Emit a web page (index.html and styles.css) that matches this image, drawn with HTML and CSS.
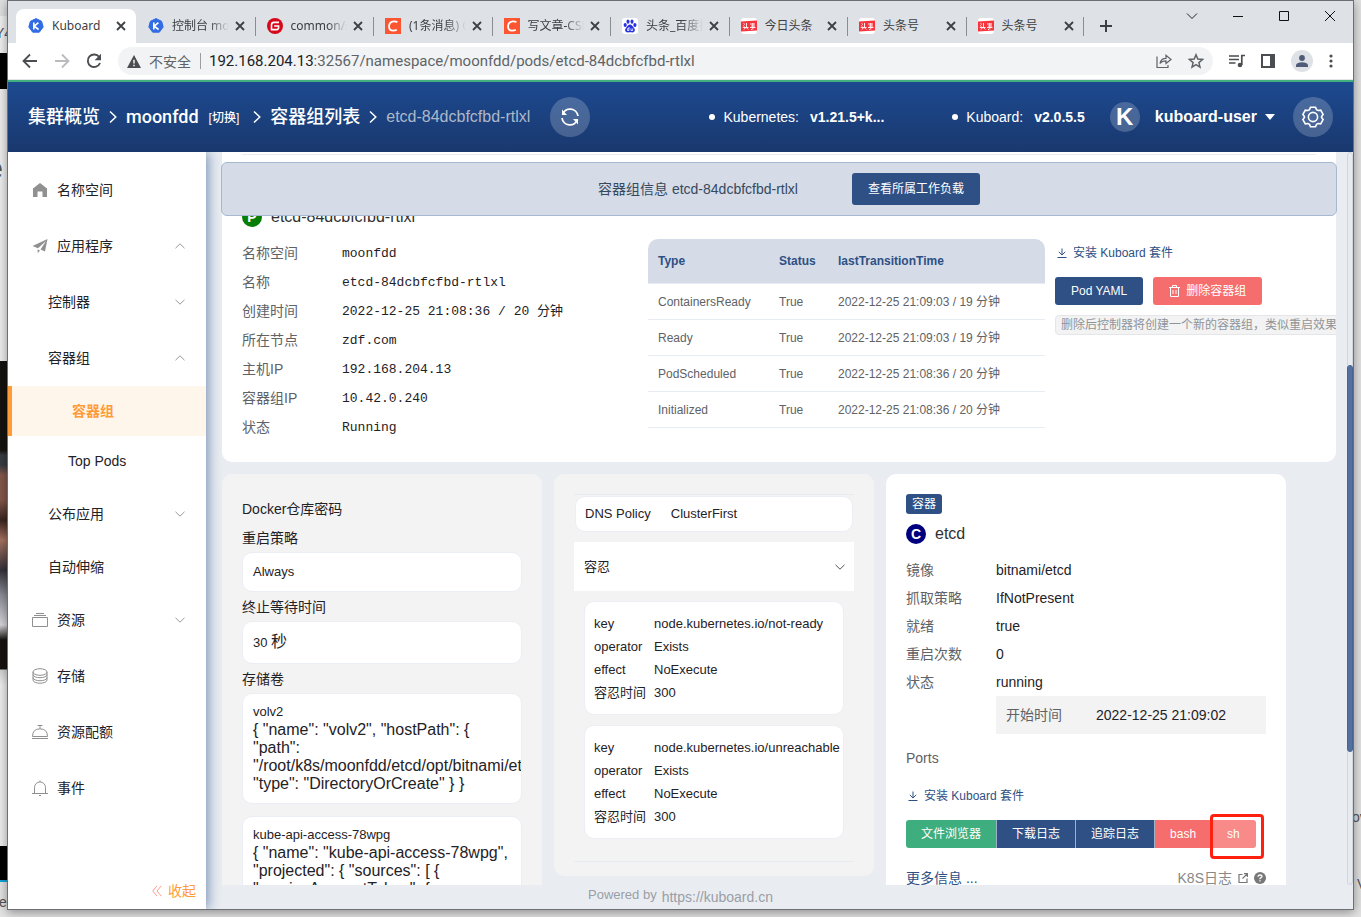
FILE: index.html
```html
<!DOCTYPE html>
<html lang="zh-CN">
<head>
<meta charset="utf-8">
<title>Kuboard</title>
<link rel="stylesheet" href="styles.css">
</head>
<body>
<svg class="defs" width="0" height="0" aria-hidden="true">
  <symbol id="close" viewBox="0 0 10 10"><path d="M1 1l8 8M9 1l-8 8" stroke="#3c4043" stroke-width="1.8" fill="none"/></symbol>
  <symbol id="fav-k" viewBox="0 0 16 16"><path d="M8 .6l5.6 2.7L15.2 9l-3.9 5.2H4.7L.8 9l1.6-5.7z" fill="#326ce5" stroke="#326ce5" stroke-linejoin="round"/><path d="M5.8 4.5v7M10.4 4.7L6.2 8.2l4.4 3.3" stroke="#fff" stroke-width="1.6" fill="none"/></symbol>
  <symbol id="fav-g" viewBox="0 0 16 16"><circle cx="8" cy="8" r="8" fill="#d7081a"/><path d="M12 4.4H7Q4.5 4.4 4.5 7v4.6h5.2q1.9 0 1.9-2V8H7.2" stroke="#fff" stroke-width="1.6" fill="none"/></symbol>
  <symbol id="fav-c" viewBox="0 0 16 16"><path d="M0 0h16v16H0z" fill="#fc5531"/><path d="M12.4 4.2Q11 3.2 8.6 3.3 4.3 3.7 4 8.2q.1 4.4 4.2 4.5 2.2 0 3.6-.9" stroke="#fff" stroke-width="1.8" fill="none"/></symbol>
  <symbol id="fav-b" viewBox="0 0 16 16"><rect width="16" height="16" rx="3" fill="#fff"/><g fill="#2932e1"><ellipse cx="3.2" cy="7" rx="1.6" ry="2.1"/><ellipse cx="6" cy="3.6" rx="1.5" ry="2.2"/><ellipse cx="10" cy="3.6" rx="1.5" ry="2.2"/><ellipse cx="12.9" cy="7" rx="1.6" ry="2.1"/><path d="M8 6.6c1.8 0 2.3 1.6 3.6 2.8 1.700 1.500 1.600 3.200.5 4.400-1.100 1-2.600.4-4.100.4s-3 .6-4.100-.4c-1.100-1.200-1.200-2.900.5-4.400C5.700 8.200 6.200 6.600 8 6.600z"/></g><path d="M7 9v3.500H5.500v-1.800H7M9 10.500v2h1.700v-2" stroke="#fff" stroke-width=".8" fill="none"/></symbol>
  <symbol id="fav-t" viewBox="0 0 16 16"><rect width="16" height="16" rx="3" fill="#fff"/><path d="M0 3.500L16 2.500v10L0 13.500z" fill="#f8333c"/><path d="M2.500 5.500l1.500 1M2 7.500l1.500 1M1.800 9.500h5.700M5.500 5v4l-2.800 2.500M5.800 10l1.500 1.500M9 6h5M10 8h4M11.800 5v6.500M9 9.500h5.500M10 11.500h1" stroke="#fff" stroke-width=".9" fill="none"/></symbol>
  <symbol id="up" viewBox="0 0 10 6"><path d="M.5 5.200L5 .8l4.500 4.400" fill="none" stroke="currentColor"/></symbol>
  <symbol id="down" viewBox="0 0 10 6"><path d="M.5 .8L5 5.200 9.500 .8" fill="none" stroke="currentColor"/></symbol>
  <symbol id="next" viewBox="0 0 8 14"><path d="M1 1.500L6.800 7 1 12.500" fill="none" stroke="currentColor" stroke-width="1.500"/></symbol>
  <symbol id="dl" viewBox="0 0 10 10"><path d="M5 .5v6.300M1.800 3.900L5 7l3.200-3.100M.5 9.500h9" fill="none" stroke="currentColor"/></symbol>
</svg>

<div class="backdrop" aria-hidden="true">
  <div class="strip-left"></div>
  <span class="bg-y4">Y4</span><span class="bg-e-big">e</span><span class="bg-e">e</span>
  <span class="bg-ov">ov</span><span class="bg-v">V</span>
</div>

<div class="window">
  <div class="tabbar">
    <div class="tabs">
      <div class="tab active"><svg class="fav"><use href="#fav-k"/></svg><span>Kuboard</span><button aria-label="关闭"><svg><use href="#close"/></svg></button></div>
      <div class="tab"><svg class="fav"><use href="#fav-k"/></svg><span>控制台 moonfdd</span><button aria-label="关闭"><svg><use href="#close"/></svg></button></div>
      <div class="tab"><svg class="fav"><use href="#fav-g"/></svg><span>common/src</span><button aria-label="关闭"><svg><use href="#close"/></svg></button></div>
      <div class="tab"><svg class="fav"><use href="#fav-c"/></svg><span>(1条消息) C</span><button aria-label="关闭"><svg><use href="#close"/></svg></button></div>
      <div class="tab"><svg class="fav"><use href="#fav-c"/></svg><span>写文章-CSDN</span><button aria-label="关闭"><svg><use href="#close"/></svg></button></div>
      <div class="tab"><svg class="fav"><use href="#fav-b"/></svg><span>头条_百度搜</span><button aria-label="关闭"><svg><use href="#close"/></svg></button></div>
      <div class="tab"><svg class="fav"><use href="#fav-t"/></svg><span>今日头条</span><button aria-label="关闭"><svg><use href="#close"/></svg></button></div>
      <div class="tab"><svg class="fav"><use href="#fav-t"/></svg><span>头条号</span><button aria-label="关闭"><svg><use href="#close"/></svg></button></div>
      <div class="tab"><svg class="fav"><use href="#fav-t"/></svg><span>头条号</span><button aria-label="关闭"><svg><use href="#close"/></svg></button></div>
    </div>
    <button class="new-tab" aria-label="新标签页"><svg width="12" height="12" viewBox="0 0 12 12"><path d="M6 0v12M0 6h12" stroke="#3c4043" stroke-width="2"/></svg></button>
    <div class="win-controls">
      <button aria-label="搜索标签页"><svg width="12" height="12" viewBox="0 0 12 12"><path d="M1 3.500l5 5 5-5" fill="none" stroke="#222"/></svg></button>
      <button aria-label="最小化"><svg width="12" height="12" viewBox="0 0 12 12"><path d="M1 6.500h10" stroke="#111"/></svg></button>
      <button aria-label="最大化"><svg width="12" height="12" viewBox="0 0 12 12"><path d="M1.500 1.500h9v9h-9z" fill="none" stroke="#111"/></svg></button>
      <button aria-label="关闭窗口"><svg width="12" height="12" viewBox="0 0 12 12"><path d="M1 1l10 10M11 1L1 11" stroke="#111"/></svg></button>
    </div>
  </div>

  <div class="toolbar">
    <button aria-label="后退"><svg width="16" height="16" viewBox="0 0 16 16"><path d="M15 8H2M8 1.500L1.500 8 8 14.500" fill="none" stroke="#4a4d51" stroke-width="1.800"/></svg></button>
    <button aria-label="前进"><svg width="16" height="16" viewBox="0 0 16 16"><path d="M1 8h13M8 1.500L14.500 8 8 14.500" fill="none" stroke="#b9bbbe" stroke-width="1.800"/></svg></button>
    <button aria-label="刷新"><svg width="16" height="16" viewBox="0 0 16 16"><path d="M13.200 4A6.300 6.300 0 1 0 14 10" fill="none" stroke="#4a4d51" stroke-width="1.900"/><path d="M15 .8v6.400H8.600z" fill="#4a4d51"/></svg></button>
    <div class="omnibox">
      <svg width="14" height="13" viewBox="0 0 14 13"><path d="M7 0l7 13H0z" fill="#4a4d51"/><path d="M7 4.800v3.700M7 9.800v1.500" stroke="#fff" stroke-width="1.400"/></svg>
      <span class="insecure">不安全</span>
      <span class="url" role="textbox" aria-label="地址栏"><b>192.168.204.13</b>:32567/namespace/moonfdd/pods/etcd-84dcbfcfbd-rtlxl</span>
      <button aria-label="分享"><svg width="16" height="14" viewBox="0 0 16 14"><path d="M1 2.500v11h11V11M4 9.500C4.500 6 7 4.300 10 4.300V1.300L15 5.500l-5 4V6.800C7 6.800 5.500 7.500 4 9.500z" fill="none" stroke="#5f6368" stroke-width="1.200"/></svg></button>
      <button aria-label="收藏"><svg width="16" height="16" viewBox="0 0 16 16"><path d="M8 1.800l1.800 4.300 4.700.4-3.600 3.100 1.100 4.600L8 11.700l-4 2.500 1.100-4.600L1.500 6.500l4.700-.4z" fill="none" stroke="#5f6368" stroke-width="1.500"/></svg></button>
    </div>
    <div class="actions">
      <button aria-label="媒体"><svg width="16" height="14" viewBox="0 0 16 14"><path d="M0 2h10M0 5.500h10M0 9h6.500" stroke="#4a4d51" stroke-width="1.500"/><path d="M12.800 11V1.500H16" fill="none" stroke="#4a4d51" stroke-width="1.700"/><circle cx="11" cy="11" r="2.300" fill="#4a4d51"/></svg></button>
      <button aria-label="侧边栏"><svg width="14" height="14" viewBox="0 0 14 14"><path d="M1 1h12v12H1z" fill="none" stroke="#4a4d51" stroke-width="2"/><path d="M9 1h4v12H9z" fill="#4a4d51"/></svg></button>
      <button aria-label="用户" class="avatar"><svg width="12" height="12" viewBox="0 0 12 12"><circle cx="6" cy="3" r="2.900" fill="#4f5b78"/><path d="M0 12V10q1-2.800 6-2.800T12 10v2z" fill="#4f5b78"/></svg></button>
      <button aria-label="菜单"><svg width="4" height="14" viewBox="0 0 4 14" fill="#4a4d51"><circle cx="2" cy="2" r="1.600"/><circle cx="2" cy="7" r="1.600"/><circle cx="2" cy="12" r="1.600"/></svg></button>
    </div>
  </div>

  <header class="header">
    <nav class="crumbs">
      <a href="#">集群概览</a><svg><use href="#next"/></svg>
      <a href="#" class="ns">moonfdd</a><a href="#" class="switch">[切换]</a><svg><use href="#next"/></svg>
      <a href="#">容器组列表</a><svg><use href="#next"/></svg>
      <span class="current">etcd-84dcbfcfbd-rtlxl</span>
    </nav>
    <button class="round" aria-label="刷新"><svg width="20" height="20" viewBox="0 0 20 20" fill="none" stroke="#fff" stroke-width="1.800"><path d="M2.500 7.500A8 8 0 0 1 18 9M17.500 12.500A8 8 0 0 1 2 11"/><path d="M2 2.500V8h5zM18 17.500V12h-5z" fill="#fff" stroke="none"/></svg></button>
    <span class="version k8s"><i></i>Kubernetes:<b>v1.21.5+k...</b></span>
    <span class="version"><i></i>Kuboard:<b>v2.0.5.5</b></span>
    <span class="kbadge">K</span>
    <button class="user">kuboard-user<svg width="10" height="6" viewBox="0 0 10 6"><path d="M0 0h10L5 6z" fill="#fff"/></svg></button>
    <button class="round" aria-label="设置"><svg width="24" height="24" viewBox="0 0 24 24" fill="none" stroke="#fff" stroke-width="1.600"><path d="M9.500 2.200h5l1 2.400 1.600.9 2.600-.3 2.400 4.200-1.500 2.100v1l1.500 2.100-2.400 4.200-2.600-.3-1.600.9-1 2.400h-5l-1-2.400-1.600-.9-2.600.3-2.400-4.200 1.500-2.100v-1L1.900 9.400l2.400-4.200 2.600.3 1.600-.9z"/><circle cx="12" cy="12" r="4.600"/></svg></button>
  </header>

  <div class="body">
    <aside class="sidebar">
      <nav class="menu">
        <a href="#"><svg width="16" height="16" viewBox="0 0 16 16"><path d="M8 1l7 5.500V15h-4.500V9.500h-5V15H1V6.500z" fill="#909090"/></svg>名称空间</a>
        <a href="#"><svg width="16" height="16" viewBox="0 0 16 16" fill="#909090"><path d="M15.500 1L13 13.500 8.500 11.500 14 3 6 10.300.5 8z"/><path d="M5.500 11.500l2.500 1-2.200 2.500z"/></svg>应用程序<svg class="arrow"><use href="#up"/></svg></a>
        <a href="#" class="sub">控制器<svg class="arrow"><use href="#down"/></svg></a>
        <a href="#" class="sub">容器组<svg class="arrow"><use href="#up"/></svg></a>
        <a href="#" class="leaf selected">容器组</a>
        <a href="#" class="leaf top-pods">Top Pods</a>
        <a href="#" class="sub">公布应用<svg class="arrow"><use href="#down"/></svg></a>
        <a href="#" class="sub short">自动伸缩</a>
        <a href="#"><svg width="16" height="16" viewBox="0 0 16 16" fill="none" stroke="#909090"><path d="M.5 5.500h15v9H.500zM2 3.500h12M4 1.500h8"/></svg>资源<svg class="arrow"><use href="#down"/></svg></a>
        <a href="#"><svg width="16" height="16" viewBox="0 0 16 16" fill="none" stroke="#909090"><ellipse cx="8" cy="4" rx="7" ry="3.300"/><path d="M1 4v8c0 4.300 14 4.300 14 0V4M1 6.500c0 4.300 14 4.300 14 0M1 9.500c0 4.300 14 4.300 14 0"/></svg>存储</a>
        <a href="#"><svg width="16" height="16" viewBox="0 0 16 16" fill="none" stroke="#909090"><path d="M0 14.500h16M.5 12.500q0-7.500 7.500-7.700 7.500.2 7.500 7.700zM8 4.500v-3M5.500 1.500h5"/></svg>资源配额</a>
        <a href="#"><svg width="16" height="16" viewBox="0 0 16 16" fill="none" stroke="#909090"><path d="M0 13.500h16M2.500 13.500V7.500a5.500 5.500 0 0 1 11 0v6M8 2V.5M7 15.500h2"/></svg>事件</a>
      </nav>
      <button class="collapse"><svg width="10" height="12" viewBox="0 0 10 12"><path d="M5 .8L.8 6 5 11.200M9.300 .8L5 6l4.300 5.200" fill="none" stroke="#f9a08a"/></svg>收起</button>
    </aside>

    <main class="main">
      <div class="affix"><span>容器组信息 etcd-84dcbfcfbd-rtlxl</span><button class="btn large">查看所属工作负载</button></div>
      <div class="scroll">
        <section class="card pod">
          <hr>
          <h2 class="title"><i class="dot green">P</i>etcd-84dcbfcfbd-rtlxl</h2>
          <div class="pod-grid">
            <dl class="info mono">
              <dt>名称空间</dt><dd>moonfdd</dd>
              <dt>名称</dt><dd>etcd-84dcbfcfbd-rtlxl</dd>
              <dt>创建时间</dt><dd>2022-12-25 21:08:36 / 20 分钟</dd>
              <dt>所在节点</dt><dd>zdf.com</dd>
              <dt>主机IP</dt><dd>192.168.204.13</dd>
              <dt>容器组IP</dt><dd>10.42.0.240</dd>
              <dt>状态</dt><dd>Running</dd>
            </dl>
            <table class="conditions">
              <thead><tr><th class="c-type">Type</th><th class="c-status">Status</th><th>lastTransitionTime</th></tr></thead>
              <tbody>
                <tr><td>ContainersReady</td><td>True</td><td>2022-12-25 21:09:03 / 19 分钟</td></tr>
                <tr><td>Ready</td><td>True</td><td>2022-12-25 21:09:03 / 19 分钟</td></tr>
                <tr><td>PodScheduled</td><td>True</td><td>2022-12-25 21:08:36 / 20 分钟</td></tr>
                <tr><td>Initialized</td><td>True</td><td>2022-12-25 21:08:36 / 20 分钟</td></tr>
              </tbody>
            </table>
            <div class="ops">
              <a href="#" class="install"><svg><use href="#dl"/></svg>安装 Kuboard 套件</a>
              <div class="ops-row"><button class="btn">Pod YAML</button><button class="btn red"><svg width="11" height="12" viewBox="0 0 11 12" fill="none" stroke="#fff"><path d="M0 2.500h11M3.500 2.500v-2h4v2M1.500 2.500v9h8v-9M4 5v4M7 5v4"/></svg>删除容器组</button></div>
              <span class="hint">删除后控制器将创建一个新的容器组，类似重启效果</span>
            </div>
          </div>
        </section>

        <div class="cards">
          <section class="card grey volumes">
            <div class="label">Docker仓库密码</div>
            <div class="label">重启策略</div>
            <div class="box value">Always</div>
            <div class="label">终止等待时间</div>
            <div class="box value seconds">30 <big>秒</big></div>
            <div class="label">存储卷</div>
            <div class="box volume"><div>volv2</div><p>{ "name": "volv2", "hostPath": { "path": "/root/k8s/moonfdd/etcd/opt/bitnami/etcd", "type": "DirectoryOrCreate" } }</p></div>
            <div class="box volume"><div>kube-api-access-78wpg</div><p>{ "name": "kube-api-access-78wpg", "projected": { "sources": [ { "serviceAccountToken": {</p></div>
          </section>

          <section class="card grey policy">
            <hr>
            <div class="box dns"><span>DNS Policy</span><span>ClusterFirst</span></div>
            <button class="fold">容忍<svg class="arrow"><use href="#down"/></svg></button>
            <dl class="box toleration">
              <dt>key</dt><dd>node.kubernetes.io/not-ready</dd>
              <dt>operator</dt><dd>Exists</dd>
              <dt>effect</dt><dd>NoExecute</dd>
              <dt>容忍时间</dt><dd>300</dd>
            </dl>
            <dl class="box toleration">
              <dt>key</dt><dd>node.kubernetes.io/unreachable</dd>
              <dt>operator</dt><dd>Exists</dd>
              <dt>effect</dt><dd>NoExecute</dd>
              <dt>容忍时间</dt><dd>300</dd>
            </dl>
            <hr>
          </section>

          <section class="card container">
            <span class="tag">容器</span>
            <h2 class="title"><i class="dot navy">C</i>etcd</h2>
            <dl class="info">
              <dt>镜像</dt><dd>bitnami/etcd</dd>
              <dt>抓取策略</dt><dd>IfNotPresent</dd>
              <dt>就绪</dt><dd>true</dd>
              <dt>重启次数</dt><dd>0</dd>
              <dt>状态</dt><dd>running</dd>
            </dl>
            <div class="started"><span>开始时间</span>2022-12-25 21:09:02</div>
            <div class="ports">Ports</div>
            <a href="#" class="install"><svg><use href="#dl"/></svg>安装 Kuboard 套件</a>
            <div class="group">
              <button class="btn teal">文件浏览器</button><button class="btn">下载日志</button><button class="btn">追踪日志</button><button class="btn red">bash</button><span class="marked"><button class="btn red light">sh</button></span>
            </div>
            <div class="more"><a href="#">更多信息 ...</a><span>K8S日志 <svg width="10" height="10" viewBox="0 0 10 10" fill="none" stroke="#777" stroke-width="1.200"><path d="M4.500 1.500H1v8h8V5.500M6 .6h3.400V4M9.400 .6L4.500 5.500"/></svg><svg width="12" height="12" viewBox="0 0 12 12"><circle cx="6" cy="6" r="6" fill="#777"/><path d="M4 4.800q0-1.800 2-1.800t2 1.600Q8 5.500 6 6.300v1M6 8.300v1.300" stroke="#fff" stroke-width="1.300" fill="none"/></svg></span></div>
          </section>
        </div>
        <div class="scrollbar"><i></i></div>
      </div>
      <footer class="footer"><span>Powered by</span><a href="#">https://kuboard.cn</a></footer>
    </main>
  </div>
</div>
</body>
</html>
```

FILE: styles.css
```css
* { box-sizing: border-box; }
body {
  margin: 0;
  height: 100vh;
  overflow: hidden;
  position: relative;
  background: #e2e2e3;
  font: 14px/20px "Liberation Sans", "Noto Sans CJK SC", sans-serif;
  color: #303133;
}
button { border: 0; padding: 0; margin: 0; background: none; font: inherit; color: inherit; cursor: pointer; }
a { color: inherit; text-decoration: none; }
dl, dd, h2, p { margin: 0; }
i { font-style: normal; }
svg { flex: none; }
.defs { position: absolute; }

/* Desktop behind the window */
.backdrop { position: absolute; inset: 0; overflow: hidden; color: #555; }
.backdrop span { position: absolute; }
.strip-left {
  width: 7px;
  height: 100%;
  background: linear-gradient(#e0e0e2 0 16px, #f1f1f2 16px 53px, #000 53px 89px, #efefef 89px 361px, #14130f 361px 450px, #383c43 455px 465px, #83584a 475px 500px, #3b2420 520px, #a77462 540px, #35313a 570px, #8b8c98 595px, #d9d7dc 625px, #17120f 640px 669px, #d2d2d2 670px, #efefef 685px 846px, #000 846px 880px, #12a4dc 880px 882px, #e4e4e4 882px);
}
.bg-y4 { left: -5px; top: 23px; font-size: 14px; color: #456; }
.bg-e-big { left: -15px; top: 158px; font-size: 32px; font-weight: bold; }
.bg-e { left: -1px; top: 892px; }
.bg-ov { left: 1352px; top: 807px; }
.bg-v { left: 1357px; top: 874px; }

/* Browser window */
.window {
  position: relative;
  display: flex;
  flex-direction: column;
  height: calc(100vh - 7px);
  margin: 0 7px;
  border: 1px solid #6c6f74;
  background: #fff;
  box-shadow: 0 2px 10px rgba(0, 0, 0, .4);
}
.tabbar { display: flex; height: 42px; padding: 8px 8px 0; background: #dee1e6; }
.tabs { display: flex; flex: 0 1 1068px; min-width: 0; }
.tab {
  flex: 1 1 0;
  min-width: 0;
  display: flex;
  align-items: center;
  height: 34px;
  padding: 0 10px 0 12px;
  position: relative;
  font: 12px/18px "Noto Sans", "Noto Sans CJK SC", sans-serif;
  color: #3c4043;
}
.tab.active { flex: 0 0 120px; background: #fff; border-radius: 8px 8px 0 0; }
.tab + .tab + .tab::before { content: ""; position: absolute; left: 0; top: 8px; width: 1px; height: 19px; background: #8a8d91; }
.tab:last-child::after { content: ""; position: absolute; right: 0; top: 8px; width: 1px; height: 19px; background: #8a8d91; }
.fav { width: 16px; height: 16px; margin-right: 8px; }
.tab span { flex: 1; min-width: 0; overflow: hidden; white-space: nowrap; -webkit-mask-image: linear-gradient(90deg, #000 65%, transparent); mask-image: linear-gradient(90deg, #000 65%, transparent); }
.tab.active span, .tab:nth-child(n+7) span { -webkit-mask-image: none; mask-image: none; }
.tab button { width: 10px; height: 10px; display: flex; margin-left: 6px; }
.tab button svg { width: 10px; height: 10px; }
.new-tab { width: 44px; height: 34px; }
.new-tab svg, .toolbar svg { display: block; margin: auto; }
.win-controls { margin-left: auto; display: flex; gap: 34px; height: 14px; padding-right: 9px; }
.win-controls svg { display: block; }

.toolbar { display: flex; align-items: center; height: 37px; padding: 0 14px; gap: 16px; border-bottom: 1px solid #e3e5e8; }
.omnibox { flex: 1; display: flex; align-items: center; height: 28px; padding: 0 9px; border-radius: 14px; background: #f1f3f4; font: 14px/20px "Noto Sans CJK SC", sans-serif; color: #5f6368; }
.omnibox svg { margin: 0; }
.insecure { margin: 0 8px; padding-right: 9px; border-right: 1px solid #9a9da1; line-height: 16px; }
.url { flex: 1; min-width: 0; overflow: hidden; white-space: nowrap; font-family: Roboto, sans-serif; font-size: 15px; }
.url b { font-weight: normal; color: #202124; }
.omnibox button { margin-left: 16px; }
.actions { display: flex; align-items: center; gap: 16px; padding-right: 6px; }
.avatar { width: 22px; height: 22px; border-radius: 50%; background: #dee1e6; }

/* Application header */
.header { display: flex; align-items: center; height: 72px; padding: 0 20px; border-top: 2px solid #41b080; background: linear-gradient(#1d4a90, #19386e); color: #fff; }
.crumbs { display: flex; align-items: center; font-size: 18px; font-weight: 500; white-space: nowrap; }
.crumbs svg { width: 8px; height: 14px; margin: 0 9px; }
.crumbs .ns { font-family: Roboto, sans-serif; }
.crumbs .switch { font-size: 12px; margin: 2px 5px 0 10px; }
.crumbs .current { font-size: 16px; font-weight: 400; color: #aeb8c9; }
.round { width: 40px; height: 40px; flex: none; border-radius: 50%; background: rgba(255, 255, 255, .2); }
.round svg { display: block; margin: auto; }
.crumbs + .round { margin-left: 20px; }
.version { display: flex; align-items: center; margin-right: 25px; white-space: nowrap; }
.version.k8s { margin-left: auto; margin-right: 68px; }
.version i { width: 6px; height: 6px; border-radius: 50%; background: #fff; margin-right: 8px; }
.version b { margin-left: 11px; }
.kbadge { width: 30px; height: 30px; border-radius: 50%; background: rgba(255, 255, 255, .2); font: bold 24px/29px "Liberation Sans", sans-serif; text-align: center; }
.user { display: flex; align-items: center; gap: 8px; margin: 0 18px 0 15px; font-size: 16px; font-weight: bold; }

.body { flex: 1; min-height: 0; display: flex; background: #e9edf2; }
.sidebar { flex: 0 0 198px; position: relative; z-index: 3; display: flex; flex-direction: column; padding-top: 10px; background: #fff; box-shadow: 2px 0 12px rgba(40, 80, 140, .6); clip-path: inset(0 -16px 0 0); }
.menu a { display: flex; align-items: center; gap: 9px; height: 56px; padding: 0 21px 0 24px; color: #1f2226; }
.menu .sub { padding-left: 40px; }
.menu .short, .menu .leaf { height: 50px; }
.menu .leaf { padding-left: 60px; }
.menu .selected { border-left: 4px solid #ff9c38; background: #fff6eb; color: #ff9c38; font-weight: bold; }
.arrow { width: 10px; height: 6px; margin-left: auto; color: #999; }
.collapse { display: flex; align-items: center; gap: 6px; margin: auto 10px 8px auto; color: #ff9c38; }

.main { flex: 1; min-width: 0; position: relative; display: flex; flex-direction: column; }
.affix { position: absolute; z-index: 2; left: 15px; right: 16px; top: 10px; height: 54px; display: flex; align-items: center; justify-content: center; gap: 54px; padding-left: 20px; background: #d5dbe7; border: 1px solid #a9b8d1; border-radius: 6px; color: #36495d; }
.btn { height: 28px; padding: 0 16px; border-radius: 3px; background: #2e5084; color: #fff; font-size: 12px; line-height: 28px; white-space: nowrap; }
.btn.large { height: 32px; }
.btn.red { background: #f66d6d; }
.btn.red svg { margin-right: 6px; vertical-align: -2px; }
.btn.teal { background: #3fae7e; }
.btn.light { background: #f88a8a; }

.scroll { flex: 1; min-height: 0; overflow: hidden; position: relative; padding: 0 17px 0 16px; }
.card { border-radius: 10px; padding: 20px; background: #fff; }
.card.grey { background: #f3f3f3; }
.card hr { border: 0; height: 1px; margin: 0; background: #e7ebf3; }
.pod { padding: 2px 0 20px 20px; border-radius: 0 0 10px 10px; overflow: hidden; }
.pod hr { margin: 0 20px 52px 0; }
.title { display: flex; align-items: center; gap: 9px; height: 20px; font-size: 16px; font-weight: normal; }
.dot { width: 20px; height: 20px; border-radius: 50%; color: #fff; font: bold 14px/20px "Liberation Sans", sans-serif; text-align: center; }
.green { background: #067d06; }
.navy { background: #00007f; }
.pod-grid { display: grid; grid-template-columns: 406fr 397fr 291fr; margin-top: 12px; align-items: start; }
.info { display: grid; grid-template-columns: 100px 1fr; line-height: 29px; color: #1f2226; }
.info dt { color: #606266; }
.mono dd { font-family: "Liberation Mono", "Noto Sans CJK SC", monospace; font-size: 13px; }
.conditions { width: 100%; border-spacing: 0; table-layout: fixed; font-size: 12px; line-height: 20px; color: #606266; }
.conditions th { height: 45px; padding: 0 10px; background: #d5dbe7; color: #2e5084; text-align: left; border-bottom: 1px solid #e7ebf3; }
.conditions th:first-child { border-top-left-radius: 10px; }
.conditions th:last-child { border-top-right-radius: 10px; }
.conditions td { height: 36px; padding: 0 10px; border-bottom: 1px solid #e7ebf3; white-space: nowrap; }
.c-type { width: 121px; }
.c-status { width: 59px; }
.ops { min-width: 0; padding: 4px 0 0 10px; overflow: hidden; }
.install { display: flex; align-items: center; gap: 6px; padding-left: 2px; font-size: 12px; line-height: 20px; color: #2e5084; }
.install svg { width: 10px; height: 10px; }
.ops-row { display: flex; gap: 10px; margin: 14px 0 10px; }
.hint { display: block; width: max-content; height: 20px; padding: 0 5px; border: 1px solid #e4e6ea; border-radius: 4px; background: #f3f3f3; font-size: 12px; line-height: 18px; color: #909399; }

.cards { display: grid; grid-template-columns: 320px 320px 400px; gap: 12px; margin-top: 12px; align-items: start; }
.box { border: 1px solid #ebeef5; border-radius: 10px; background: #fff; margin: 0 1px; padding: 9px; color: #1f2226; overflow: hidden; }
.volumes { padding-top: 25px; color: #1f2226; }
.label + .label { margin-top: 9px; }
.value { margin: 4px 0 5px; padding: 9px 10px; font-size: 13px; }
.seconds { line-height: 22px; }
.seconds big { font-size: 16px; }
.volume { margin: 4px 0 12px; padding: 9px 10px 10px; font-size: 13px; }
.volume div { line-height: 18px; }
.volume p { font-size: 16px; line-height: 18px; }
.dns { display: flex; gap: 20px; padding: 7px 9px; margin-top: 1px; font-size: 13px; }
.fold { display: flex; align-items: center; width: 100%; height: 49px; margin: 10px 0; padding: 0 9px 0 10px; background: #fff; font-size: 13px; color: #1f2226; }
.fold .arrow { color: #555; }
.toleration { display: grid; grid-template-columns: 60px 1fr; margin: 0 10px 10px; padding: 10px 9px; font-size: 13px; line-height: 23px; }
.toleration dd { white-space: nowrap; min-width: 0; }
.policy hr:last-child { margin-top: 22px; }
.policy { padding-bottom: 14px; }
.tag { display: block; width: max-content; height: 20px; padding: 0 6px; border-radius: 3px; background: #2e5084; color: #fff; font-size: 12px; }
.container .title { margin: 10px 0 12px; }
.container .info { grid-template-columns: 90px 1fr; line-height: 28px; }
.started { display: flex; margin-left: 90px; padding: 9px 10px; background: #f3f3f3; color: #1f2226; }
.started span { width: 90px; color: #606266; }
.ports { margin: 14px 0 18px; color: #606266; }
.group { display: flex; margin: 14px 0 20px; }
.group .btn { border-radius: 0; padding: 0 15px; border-right: 1px solid #9db0cc; }
.group .btn:first-child { border-radius: 3px 0 0 3px; }
.group .btn.red { border-right: 0; }
.group .btn.light { border-radius: 0 3px 3px 0; padding: 0 16px; }
.marked { position: relative; }
.marked::after { content: ""; position: absolute; left: -1px; top: -6px; right: -8px; bottom: -11px; border: 3px solid #ff2010; border-radius: 4px; pointer-events: none; }
.more { display: flex; justify-content: space-between; color: #2e5084; }
.more span { display: flex; align-items: center; gap: 6px; color: #888; }

.scrollbar { position: absolute; right: 0; top: 0; bottom: 0; width: 6px; border: 1px solid #cfd6de; border-radius: 3px; background: #e7ebf0; }
.scrollbar i { position: absolute; left: -1px; right: -1px; top: 29%; height: 53%; border-radius: 3px; background: #5470a0; border: 1px solid #496493; }
.footer { flex: 0 0 24px; display: flex; justify-content: center; gap: 5px; padding-right: 198px; color: #9a9ea5; font-size: 13px; }
.footer a { font-size: 14px; padding-top: 2px; }
```
